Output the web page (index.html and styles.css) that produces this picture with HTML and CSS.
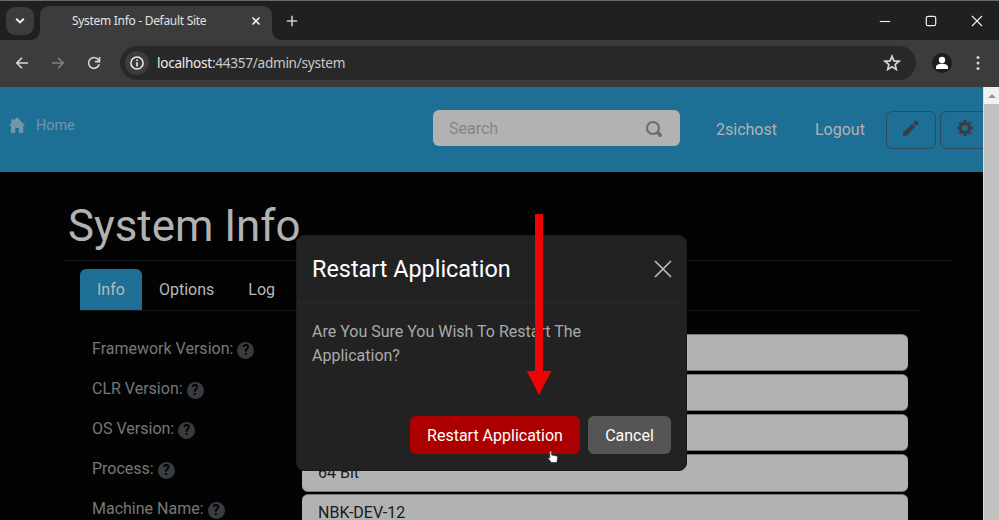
FILE: index.html
```html
<!DOCTYPE html>
<html lang="en">
<head>
<meta charset="utf-8">
<title>System Info - Default Site</title>
<link rel="stylesheet" href="styles.css">
</head>
<body>
<div class="window">
  <div class="tabbar">
    <button class="tab-search"><svg width="12" height="8" viewBox="0 0 12 8"><path d="M2.200 1.800L6 5.500 9.800 1.800" fill="none" stroke="#eee" stroke-width="1.900"/></svg></button>
    <div class="tab">
      <span class="tab-title">System Info - Default Site</span>
      <svg class="tab-close" width="10" height="10" viewBox="0 0 10 10"><path d="M1.500 1.500l7 7m0-7l-7 7" stroke="#eee" stroke-width="1.600"/></svg>
    </div>
    <svg class="new-tab" width="12" height="12" viewBox="0 0 12 12"><path d="M6 .8v10.400M.8 6h10.400" stroke="#ccc" stroke-width="1.600"/></svg>
    <div class="win-controls">
      <svg width="12" height="12" viewBox="0 0 12 12"><path d="M.8 6.500h10.400" stroke="#eee" stroke-width="1.100"/></svg>
      <svg width="12" height="12" viewBox="0 0 12 12"><rect x="1.300" y="1.300" width="9.400" height="9.400" rx="1.800" fill="none" stroke="#eee" stroke-width="1.200"/></svg>
      <svg width="12" height="12" viewBox="0 0 12 12"><path d="M1 1l10 10M11 1L1 11" stroke="#eee" stroke-width="1.200"/></svg>
    </div>
  </div>
  <div class="toolbar">
    <svg class="nav-icon" width="14" height="14" viewBox="0 0 14 14"><path d="M13 7H2M7 1.800L1.800 7 7 12.200" fill="none" stroke="#d8d8d8" stroke-width="1.600"/></svg>
    <svg class="nav-icon" width="14" height="14" viewBox="0 0 14 14"><path d="M1 7h11M7 1.800L12.200 7 7 12.200" fill="none" stroke="#838383" stroke-width="1.600"/></svg>
    <svg class="nav-icon" width="14" height="14" viewBox="0 0 14 14"><path d="M12.200 8.200A5.400 5.400 0 1 1 11.300 3.700L12.500 5" fill="none" stroke="#d8d8d8" stroke-width="1.600"/><path d="M12.500 1v4.600H8" fill="none" stroke="#d8d8d8" stroke-width="1.600"/></svg>
    <div class="address">
      <span class="site-info"><svg width="14" height="14" viewBox="0 0 14 14"><circle cx="7" cy="7" r="6.100" fill="none" stroke="#eee" stroke-width="1.500"/><path d="M7 6.200v4.200M7 3.500v1.600" stroke="#eee" stroke-width="1.600"/></svg></span>
      <span class="url"><b>localhost</b>:44357/admin/system</span>
      <svg class="star" width="18" height="18" viewBox="0 0 18 18"><path d="M9 2.200l1.900 4.700 5 .4-3.800 3.200 1.200 4.900L9 12.800l-4.300 2.600 1.200-4.900L2.100 7.300l5-.4z" fill="none" stroke="#d5d5d5" stroke-width="1.700"/></svg>
    </div>
    <svg class="avatar" width="20" height="20" viewBox="0 0 20 20"><circle cx="10" cy="10" r="10" fill="#1d1d1d"/><circle cx="10" cy="7" r="3.200" fill="#fff"/><path d="M4 15.500v-1.500c0-2 3-3.200 6-3.200s6 1.200 6 3.200v1.500q0 .6-.6.6H4.600q-.6 0-.6-.6z" fill="#fff"/></svg>
    <svg class="kebab" width="4" height="16" viewBox="0 0 4 16"><g fill="#d5d5d5"><circle cx="2" cy="2.600" r="1.500"/><circle cx="2" cy="8" r="1.500"/><circle cx="2" cy="13.400" r="1.500"/></g></svg>
  </div>
  <div class="viewport">
    <div class="page">
      <header class="site-header">
        <a class="home"><svg width="18" height="17" viewBox="0 0 18 17"><path d="M9 .3L17.400 8.600H15.200V16H10.900V11H7.300V16H2.900V8.600H.7L3.300 6V2.200H5.500V3.800z"/></svg><span>Home</span></a>
        <div class="search"><span>Search</span><svg width="18" height="18" viewBox="0 0 18 18"><circle cx="8" cy="8" r="6" fill="none" stroke="#6d6d6d" stroke-width="2.200"/><path d="M13 13l2.300 2.300" stroke="#6d6d6d" stroke-width="3.600" stroke-linecap="round"/></svg></div>
        <a class="user">2sichost</a>
        <a class="logout">Logout</a>
        <button class="tool"><svg width="16" height="16" viewBox="0 0 16 16"><path d="M0 16v-3.300L9 3.800 12.200 7 3.300 16zM10 2.800l2-2q.7-.7 1.400 0l1.800 1.800q.7.700 0 1.400l-2 2z" fill="#3b3c3f"/></svg></button>
        <button class="tool gear"><svg width="16" height="16" viewBox="0 0 16 16"><g fill="none" stroke="#3b3c3f"><circle cx="8" cy="8" r="4.500" stroke-width="3"/><path d="M8 0v3M8 13v3M0 8h3M13 8h3M2.340 2.340l2.100 2.100M11.560 11.560l2.100 2.100M13.660 2.340l-2.100 2.100M4.440 11.560l-2.100 2.100" stroke-width="2.800"/></g></svg></button>
      </header>
      <main class="content">
        <h1>System Info</h1>
        <nav class="tabs"><a class="active">Info</a><a>Options</a><a>Log</a></nav>
        <div class="rows">
          <div class="row"><label>Framework Version: <i>?</i></label><div class="field"></div></div>
          <div class="row"><label>CLR Version: <i>?</i></label><div class="field"></div></div>
          <div class="row"><label>OS Version: <i>?</i></label><div class="field"></div></div>
          <div class="row"><label>Process: <i>?</i></label><div class="field">64 Bit</div></div>
          <div class="row"><label>Machine Name: <i>?</i></label><div class="field">NBK-DEV-12</div></div>
        </div>
      </main>
    </div>
    <div class="scrollbar"><div class="scroll-up"></div></div>
  </div>
</div>
<div class="modal">
  <div class="modal-header"><h5>Restart Application</h5><svg width="18" height="18" viewBox="0 0 18 18"><path d="M1.500 1.500l15 15m0-15l-15 15" stroke="#b9b9b9" stroke-width="1.700" stroke-linecap="round"/></svg></div>
  <div class="modal-body">Are You Sure You Wish To Restart The Application?</div>
  <div class="modal-footer"><button class="btn danger">Restart Application</button><button class="btn secondary">Cancel</button></div>
</div>
<svg class="arrow" width="26" height="182" viewBox="0 0 26 182"><path d="M9 0h8v157h8.500L13 181 .8 157H9z" fill="#eb0505"/></svg>
<svg class="cursor" width="12" height="14" viewBox="0 0 12 14"><path d="M2.800 1.500q1-1 1.800.2V5l5 1q1.400.4 1 2L9.800 12.500H4.300L1 8.300q.2-1.200 1.800-.2z" fill="#fff" stroke="#333" stroke-width=".7"/></svg>
</body>
</html>
```
FILE: styles.css
```css
* { box-sizing: border-box; }
body { margin: 0; width: 999px; height: 520px; overflow: hidden; background: #030303; font: 16px/24px Roboto, sans-serif; }
svg { display: block; flex: none; }
button { font: inherit; padding: 0; border: 0; }
.window { height: 520px; display: flex; flex-direction: column; background: #3c3c3c; }

.tabbar { height: 40px; flex: none; display: flex; align-items: center; background: #1f2120; border-top: 1px solid #686b69; padding-left: 6px; }
.tab-search { width: 28px; height: 28px; border-radius: 9px; background: #3c3c3c; display: flex; align-items: center; justify-content: center; margin-right: 6px; }
.tab { position: relative; align-self: flex-end; width: 232px; height: 34px; background: #3c3c3c; border-radius: 9px 9px 0 0; display: flex; align-items: center; padding: 0 11px 5px 32px; }
.tab::before, .tab::after { content: ""; position: absolute; bottom: 0; width: 9px; height: 9px; }
.tab::before { left: -9px; background: radial-gradient(circle at 0 0, transparent 8.500px, #3c3c3c 9px); }
.tab::after { right: -9px; background: radial-gradient(circle at 100% 0, transparent 8.500px, #3c3c3c 9px); }
.tab-title { flex: 1; font: 12px/16px "Noto Sans", sans-serif; letter-spacing: -.3px; color: #e3e3e3; white-space: nowrap; }
.new-tab { margin-left: 14px; }
.win-controls { margin-left: auto; display: flex; gap: 34px; padding-right: 16px; }

.toolbar { height: 47px; flex: none; display: flex; align-items: center; background: #3c3c3c; padding: 0 19px 1px 15px; }
.nav-icon { margin-right: 22px; }
.address { margin-left: -3px; width: 796px; height: 34px; border-radius: 17px; background: #282828; display: flex; align-items: center; padding: 0 15px 0 5px; }
.site-info { width: 24px; height: 24px; border-radius: 50%; background: #3c3c3c; display: flex; align-items: center; justify-content: center; }
.url { flex: 1; margin-left: 8px; font: 13.600px/20px "Noto Sans", sans-serif; color: #c9c9c9; letter-spacing: -.28px; }
.url b { font-weight: 400; color: #ededed; }
.avatar { margin-left: 16px; }
.kebab { margin-left: auto; }

.viewport { flex: 1; min-height: 0; display: flex; }
.page { width: 983px; overflow: hidden; background: #030303; }
.scrollbar { width: 16px; background: #c1c1c1; border-left: 1px solid #ddd; }
.scroll-up { height: 17px; background: #f1f1f1; display: flex; align-items: center; justify-content: center; }
.scroll-up::before { content: ""; border: 4px solid transparent; border-top: 0; border-bottom: 4px solid #969696; }

.site-header { height: 85px; width: 1010px; background: #1e6f96; display: flex; align-items: center; color: #b2b2b2; padding-left: 8px; }
.home { width: 425px; display: flex; align-items: center; gap: 10px; color: #7396a8; fill: #7396a8; font-size: 14.400px; padding-bottom: 9px; }
.home span { padding-top: 2px; }
.search { width: 247px; height: 36px; margin-top: -3px; border-radius: 6px; background: #b2b2b2; color: #858585; display: flex; align-items: center; justify-content: space-between; padding: 1px 17px 0 16px; }
.user { width: 99px; margin-left: 36px; }
.logout { width: 71px; }
.tool { width: 50px; height: 38px; flex: none; border: 1px solid #34495a; border-radius: 6px; background: none; display: flex; align-items: center; justify-content: center; margin-right: 4px; }
.tool svg { margin-top: -3px; }

.content { width: 888px; margin-left: 64px; }
h1 { margin: 0; height: 89px; padding: 26px 0 0 4px; border-bottom: 1px solid #171717; color: #b2b2b2; font-size: 43.800px; line-height: 56px; font-weight: 400; }
.tabs { height: 50px; margin: 0 32px 0 16px; padding-top: 8px; display: flex; border-bottom: 1px solid #171717; }
.tabs a { padding: 9px 17px 0; color: #b8b8b8; border-radius: 6px 6px 0 0; }
.tabs .active { background: #1e6f96; width: 62px; }
.rows { margin: 23px 44px 0 28px; display: grid; gap: 3px; }
.row { height: 37px; display: grid; grid-template-columns: 210px 1fr; }
label { color: #777; line-height: 24px; display: flex; align-items: center; gap: 4px; height: 30px; }
label i { margin-top: 2px; width: 17px; height: 17px; border-radius: 50%; background: #383c41; color: #030303; text-align: center; font: 700 14px/17px Roboto, sans-serif; }
.field { background: #b2b2b2; border: 1px solid #777; border-width: 1px 0; border-radius: 6px; color: #171a1d; padding: 6px 16px; }

.modal { position: absolute; left: 296px; top: 235px; width: 391px; height: 236px; border-radius: 8px; border: 1px solid #1b1b1b; background: #222; display: flex; flex-direction: column; }
.modal-header { height: 67px; display: flex; align-items: center; justify-content: space-between; padding: 0 14px 0 15px; border-bottom: 1px solid #292929; }
h5 { margin: 0; font-size: 23.400px; font-weight: 400; color: #fff; line-height: 30px; }
.modal-body { flex: 1; padding: 17px 60px 0 15px; color: #aaa; }
.modal-footer { height: 71px; border-top: 1px solid #262626; display: flex; gap: 8px; justify-content: flex-end; align-items: flex-start; padding: 16px 15px 0; }
.btn { height: 38px; padding-top: 2px; border-radius: 6px; color: #fff; }
.danger { width: 170px; background: #ac0000; }
.secondary { width: 83px; background: #555; }
.arrow { position: absolute; left: 526px; top: 214px; }
.cursor { position: absolute; left: 547px; top: 450px; }
```
